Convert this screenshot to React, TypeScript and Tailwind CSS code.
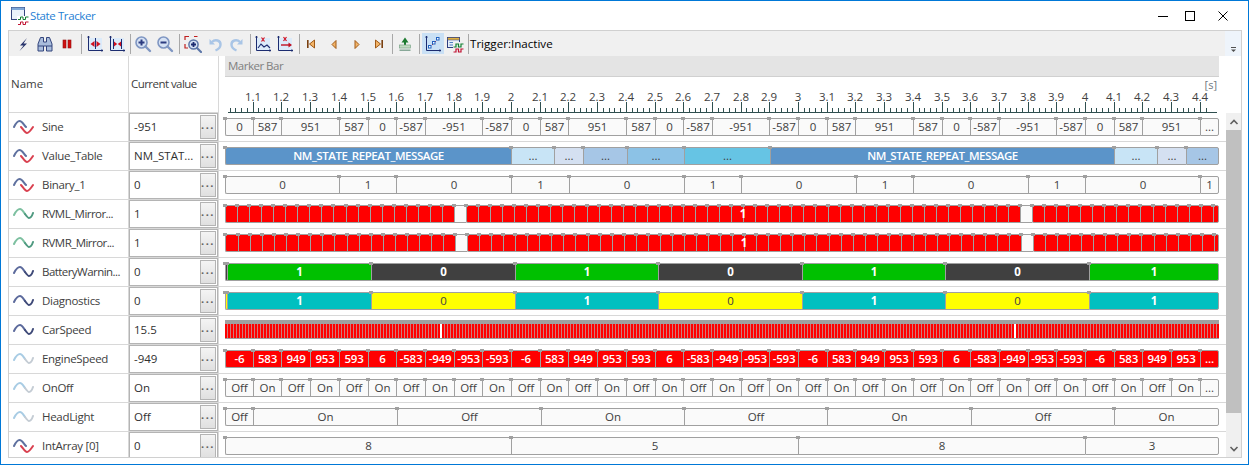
import React from "react";

const X = (t: number) => Math.round(511 + 287 * (t - 2));
const END = 1219;
const START = 225;

type Seg = { w: number; label?: string; cls: string; noMark?: boolean };
const LIGHT = "bg-[#fafafa] text-[#404040]";
const RED = "bg-[#ff0000] text-white";

function segs(bounds: number[], labels: string[], cls: (i: number, l: string) => string): Seg[] {
  return labels.map((label, i) => ({ w: bounds[i + 1] - bounds[i], label, cls: cls(i, label) }));
}

function tenths(from: number, n: number) {
  const out: number[] = [];
  for (let i = 0; i < n; i++) out.push(X(from + i * 0.1));
  return out;
}

function Segment({ s, last }: { s: Seg; last: boolean }) {
  return (
    <div
      style={{ width: s.w }}
      className={`relative flex h-[18px] shrink-0 items-center justify-center whitespace-nowrap border-y border-l border-[#a0a0a0] text-[11.5px] leading-none first:rounded-l-[2px] ${last ? "rounded-r-[2px] border-r" : ""} ${s.cls}`}
    >
      {!s.noMark && <span className="absolute left-[-3px] top-[-2px] h-[3px] w-[4px] bg-[#a0a0a0]" />}
      {s.label}
    </div>
  );
}

function Bar({ items }: { items: Seg[] }) {
  return (
    <div className="flex">
      {items.map((s, i) => (
        <Segment key={i} s={s} last={i === items.length - 1} />
      ))}
    </div>
  );
}

function sineRow(): Seg[] {
  const vals = ["0", "587", "951", "587", "0", "-587", "-951", "-587"];
  const offs = [0, 0.1, 0.2, 0.4, 0.5, 0.6, 0.7, 0.9];
  const b: number[] = [];
  const l: string[] = [];
  for (let p = 0; p < 3; p++) vals.forEach((v, i) => { b.push(X(1 + p + offs[i])); l.push(v); });
  [0, 0.1, 0.2].forEach((o, i) => { b.push(X(4 + o)); l.push(vals[i]); });
  b.push(X(4.4)); l.push("...");
  b.push(END);
  b[0] = START;
  return segs(b, l, () => LIGHT);
}

function engineRow(): Seg[] {
  const vals = ["-6", "583", "949", "953", "593", "6", "-583", "-949", "-953", "-593"];
  const b = tenths(1, 35);
  b[0] = START;
  b.push(END);
  const l = b.slice(0, -1).map((_, i) => (i === 34 ? "..." : vals[i % 10]));
  return segs(b, l, () => `${RED} font-semibold tracking-[-0.2px]`);
}

function onOffRow(): Seg[] {
  const b = tenths(1, 35);
  b[0] = START;
  b.push(END);
  const l = b.slice(0, -1).map((_, i) => (i === 34 ? "..." : i % 2 ? "On" : "Off"));
  return segs(b, l, () => LIGHT);
}

const MAIN = "bg-[#5b94c9] text-white font-semibold tracking-[-0.45px]";
const vtColors = [
  MAIN,
  "bg-[#c8e4f6] text-[#404040]",
  "bg-[#d4e0f1] text-[#404040]",
  "bg-[#a6c6e6] text-[#404040]",
  "bg-[#8cc2e6] text-[#404040]",
  "bg-[#66c4e4] text-[#404040]",
  MAIN,
  "bg-[#c8e4f6] text-[#404040]",
  "bg-[#d4e0f1] text-[#404040]",
  "bg-[#a6c6e6] text-[#404040]",
];
const MSG = "NM_STATE_REPEAT_MESSAGE";
const valueTable = segs(
  [START, 511, 554, 583, 627, 684, 770, 1114, 1157, 1186, END],
  [MSG, "...", "...", "...", "...", "...", MSG, "...", "...", "..."],
  (i) => vtColors[i]
);

const binary = segs(
  [START, 339, 396, 511, 569, 684, 741, 856, 913, 1028, 1085, 1200, END],
  ["0", "1", "0", "1", "0", "1", "0", "1", "0", "1", "0", "1"],
  () => LIGHT
);

function alt(a: string, b: string, first: string) {
  const bounds = [START, 227, 371, 515, 658, 802, 945, 1089, END];
  const labels = ["", "1", "0", "1", "0", "1", "0", "1"];
  return segs(bounds, labels, (i) => (i === 0 ? first : i % 2 ? a : b));
}

const Mark = () => <span className="absolute left-[-3px] top-[-2px] h-[3px] w-[4px] bg-[#a0a0a0]" />;

function Cells({ n, w, shift = 0 }: { n: number; w: number; shift?: number }) {
  return (
    <>
      {Array.from({ length: n }, (_, i) => {
        const x0 = Math.round(i * w);
        const x1 = Math.round((i + 1) * w);
        return (
          <div
            key={i}
            style={{ width: x1 - x0 + (i === 0 ? shift : 0) }}
            className="relative h-[18px] shrink-0 border-y border-l border-[#a0a0a0] bg-[#ff0000] first:rounded-l-[2px]"
          >
            <Mark />
          </div>
        );
      })}
    </>
  );
}

function Mirror({ shift }: { shift: number }) {
  const cell = "relative h-[18px] w-[12px] shrink-0 border-y border-l border-[#a0a0a0] bg-[#fafafa]";
  return (
    <div className="flex w-[994px]">
      <div className="flex">
        <Cells n={19} w={12.05} shift={shift} />
      </div>
      <div className={cell}><Mark /></div>
      <div className="relative flex">
        <Cells n={46} w={12.05} />
        <span className="absolute inset-0 flex items-center justify-center text-[11.5px] font-bold leading-none text-white">1</span>
      </div>
      <div className={cell}><Mark /></div>
      <div className="flex flex-1">
        <Cells n={15} w={12.05} />
        <div className="relative h-[18px] flex-1 rounded-r-[2px] border border-[#a0a0a0] bg-[#ff0000]"><Mark /></div>
      </div>
    </div>
  );
}

function CarSpeed() {
  const stripes =
    "h-[19px] shrink-0 border-y border-t-[4px] border-[#a0a0a0] bg-[repeating-linear-gradient(90deg,#ff0000_0,#ff0000_2px,#cc7c7c_2px,#cc7c7c_3px)]";
  const gap = "h-[19px] w-[2px] shrink-0 border-y border-t-[4px] border-[#a0a0a0] bg-white";
  return (
    <div className="mt-[-1px] flex">
      <div style={{ width: 215 }} className={stripes} />
      <div className={gap} />
      <div style={{ width: 572 }} className={stripes} />
      <div className={gap} />
      <div style={{ width: 203 }} className={stripes} />
    </div>
  );
}

function Wave({ kind }: { kind: "red" | "green" | "navy" | "pale" }) {
  if (kind === "red")
    return (
      <svg width="21" height="16" viewBox="0 0 21 16" fill="none" strokeWidth="2" strokeLinecap="round">
        <path d="M1 8 C3 4 5 2 6.5 2 C9 2 11 6 13 8" stroke="#5f719f" />
        <path d="M8 8 C10 10 12 14 14 14 C16 14 18 11 20 8" stroke="#d9404f" />
      </svg>
    );
  const c = kind === "green" ? ["#7dc0a0", "#4f9a80"] : kind === "navy" ? ["#5c6a9c", "#3f4a78"] : ["#a8cce4", "#c4ccd4"];
  return (
    <svg width="21" height="16" viewBox="0 0 21 16" fill="none" strokeWidth="2" strokeLinecap="round">
      <path d="M1 9 C3 5 5 3 7 3 C9 3 10.5 6 12 8" stroke={c[0]} />
      <path d="M12 8 C13.5 10 15 12 16 12 C17.5 12 19 10 20 7" stroke={c[1]} />
    </svg>
  );
}

const WHITE = "text-white font-bold";
const rows: { name: string; value: string; wave: "red" | "green" | "navy" | "pale"; chart: React.ReactNode }[] = [
  { name: "Sine", value: "-951", wave: "red", chart: <Bar items={sineRow()} /> },
  { name: "Value_Table", value: "NM_STAT...", wave: "red", chart: <Bar items={valueTable} /> },
  { name: "Binary_1", value: "0", wave: "red", chart: <Bar items={binary} /> },
  { name: "RVML_Mirror...", value: "1", wave: "green", chart: <Mirror shift={0} /> },
  { name: "RVMR_Mirror...", value: "1", wave: "green", chart: <Mirror shift={1} /> },
  {
    name: "BatteryWarnin...",
    value: "0",
    wave: "navy",
    chart: <Bar items={alt(`bg-[#00c000] ${WHITE}`, `bg-[#404040] ${WHITE}`, "bg-[#404040]")} />,
  },
  {
    name: "Diagnostics",
    value: "0",
    wave: "navy",
    chart: <Bar items={alt(`bg-[#00c0c0] ${WHITE}`, "bg-[#ffff00] text-[#404040]", "bg-[#ffff00]")} />,
  },
  { name: "CarSpeed", value: "15.5", wave: "navy", chart: <CarSpeed /> },
  { name: "EngineSpeed", value: "-949", wave: "pale", chart: <Bar items={engineRow()} /> },
  { name: "OnOff", value: "On", wave: "pale", chart: <Bar items={onOffRow()} /> },
  {
    name: "HeadLight",
    value: "Off",
    wave: "pale",
    chart: <Bar items={segs([START, 253, 397, 541, 684, 827, 971, 1114, END], ["Off", "On", "Off", "On", "Off", "On", "Off", "On"], () => LIGHT)} />,
  },
  { name: "IntArray [0]", value: "0", wave: "red", chart: <Bar items={segs([START, 511, 798, 1085, END], ["8", "5", "8", "3"], () => LIGHT)} /> },
];

function Ruler() {
  const small: number[] = [];
  for (let i = 1; i <= 171; i++) small.push(X(1 + i * 0.02));
  const labels: number[] = [];
  for (let i = 11; i <= 44; i++) labels.push(i / 10);
  return (
    <svg width="994" height="36" viewBox="225 77 994 36" className="block shrink-0">
      <line x1="228" y1="112.5" x2="1217" y2="112.5" stroke="#2f4f4f" />
      {small.map((x, i) => (x < 1217 ? <line key={i} x1={x + 0.5} x2={x + 0.5} y1="108" y2="112" stroke="#2f4f4f" /> : null))}
      {labels.map((t) => (
        <g key={t}>
          <line x1={X(t) + 0.5} x2={X(t) + 0.5} y1="102" y2="112" stroke="#2f4f4f" />
          <text x={X(t)} y="101" textAnchor="middle" fontSize="11.5" fill="#404040">
            {Number.isInteger(t) ? t : t.toFixed(1)}
          </text>
        </g>
      ))}
      <text x="1217" y="89" textAnchor="end" fontSize="11" fill="#707880">[s]</text>
    </svg>
  );
}

const I = ({ children }: { children: React.ReactNode }) => (
  <svg width="18" height="18" viewBox="0 0 18 18" fill="none">{children}</svg>
);

const Axes = () => (
  <>
    <rect x="3" y="3" width="13" height="12" fill="#dcebfa" />
    <path d="M2.5 1 V15.5 H17" stroke="#1c2c70" strokeWidth="1" />
    <path d="M1.5 2.5 L2.5 1 L3.5 2.5 M15.5 14.5 L17 15.5 L15.5 16.5" stroke="#1c2c70" strokeWidth="0.8" />
  </>
);

const Mag = ({ sign }: { sign: "+" | "-" }) => (
  <>
    <circle cx="7.5" cy="7.5" r="5.5" fill="#d6e2f4" stroke="#7f96c2" strokeWidth="1.6" />
    <path d="M11.5 11.5 L16 16" stroke="#7f96c2" strokeWidth="2.4" strokeLinecap="round" />
    <path d={sign === "+" ? "M4.5 7.5 H10.5 M7.5 4.5 V10.5" : "M4.5 7.5 H10.5"} stroke="#2c3c80" strokeWidth="2" />
  </>
);

const TRI = { fill: "#f2b468", stroke: "#a05a18", strokeWidth: 1 };

const icons: Record<string, React.ReactNode> = {
  bolt: <I><path d="M13 3 L6 10.5 H9.5 L5.5 16 L13 8.5 H9.5 Z" fill="#28346c" /></I>,
  bino: (
    <I>
      <path d="M2 9 L4.5 2.5 H7.5 V7 H10.5 V2.5 H13.5 L16 9 V16 H10.5 V11 H7.5 V16 H2 Z" fill="#a9bddc" stroke="#33447c" strokeWidth="1" />
      <path d="M2 11 H7.5 M10.5 11 H16" stroke="#33447c" strokeWidth="1" />
    </I>
  ),
  pause: <I><rect x="5" y="5" width="3" height="8" fill="#d01010" stroke="#901010" strokeWidth="0.6" /><rect x="10" y="5" width="3" height="8" fill="#d01010" stroke="#901010" strokeWidth="0.6" /></I>,
  expand: <I><Axes /><path d="M9.5 3 V14" stroke="#1c2c70" /><path d="M8.5 6 L4.5 9 L8.5 12 Z M10.5 6 L14.5 9 L10.5 12 Z" fill="#d01020" /></I>,
  shrink: <I><Axes /><path d="M5.5 4 V14 M13.5 4 V14" stroke="#1c2c70" /><path d="M6 6.5 L9.2 9 L6 11.5 Z M13 6.5 L9.8 9 L13 11.5 Z" fill="#d01020" /></I>,
  zin: <I><Mag sign="+" /></I>,
  zout: <I><Mag sign="-" /></I>,
  zbox: (
    <I>
      <path d="M1 5 V1.5 H5 M10 1.5 H13.5 M1 9 V13 H4" stroke="#c02020" strokeWidth="1.2" />
      <circle cx="9.5" cy="9.5" r="4.6" fill="#d6e2f4" stroke="#5c76a8" strokeWidth="1.5" />
      <path d="M13 13 L17 17" stroke="#5c76a8" strokeWidth="2.2" strokeLinecap="round" />
      <path d="M7 9.5 H12 M9.5 7 V12" stroke="#1c2c70" strokeWidth="1.8" />
    </I>
  ),
  undo: <I><path d="M3.5 4 V9.5 H9 Z" fill="#a9c5e6" /><path d="M6 7 C9 4 15 5 14.5 10 C14.3 12.5 12 14.5 9.5 15.5" stroke="#a9c5e6" strokeWidth="2.4" /></I>,
  redo: <I><path d="M14.5 4 V9.5 H9 Z" fill="#a9c5e6" /><path d="M12 7 C9 4 3 5 3.5 10 C3.7 12.5 6 14.5 8.5 15.5" stroke="#a9c5e6" strokeWidth="2.4" /></I>,
  gx: <I><Axes /><path d="M4 13 L7 9 L10 12 L13 10 L16 13" stroke="#1c2c70" strokeWidth="1.1" /><path d="M7.5 2.5 L10.5 6.5 M10.5 2.5 L7.5 6.5" stroke="#d01020" strokeWidth="1.2" /></I>,
  gr: <I><Axes /><path d="M5 10 H13" stroke="#c01020" strokeWidth="1.4" /><path d="M12.5 7.5 L16 10 L12.5 12.5 Z" fill="#c01020" /><path d="M7.5 2 L10.5 6 M10.5 2 L7.5 6" stroke="#d01020" strokeWidth="1.2" /></I>,
  first: <I><rect x="5" y="5" width="1.6" height="8" fill="#7a4010" /><path d="M12.5 5 V13 L7.5 9 Z" {...TRI} /></I>,
  prev: <I><path d="M11 5.5 V13.5 L7 9.5 Z" {...TRI} /></I>,
  next: <I><path d="M7 5.5 V13.5 L11 9.5 Z" {...TRI} /></I>,
  last: <I><rect x="11.4" y="5" width="1.6" height="8" fill="#7a4010" /><path d="M5.5 5 V13 L10.5 9 Z" {...TRI} /></I>,
  stamp: <I><path d="M9 2.5 L12.5 7.5 H5.5 Z" fill="#1c7a30" /><rect x="8" y="6" width="2" height="4" fill="#1c7a30" /><rect x="3.5" y="10" width="11" height="3" fill="#c4dcc4" stroke="#7aa488" strokeWidth="0.7" /><rect x="3.5" y="14.5" width="11" height="1.5" fill="#88a898" /></I>,
  scatter: (
    <I>
      <path d="M2.5 1 V15.5 H17" stroke="#1c2c70" strokeWidth="1" />
      <path d="M1.5 2.5 L2.5 1 L3.5 2.5 M15.5 14.5 L17 15.5 L15.5 16.5" stroke="#1c2c70" strokeWidth="0.8" />
      <path d="M5 13 L15 3" stroke="#d02020" strokeWidth="1" strokeDasharray="2 2" />
      <rect x="4.5" y="10.5" width="2.5" height="2.5" fill="#fff" stroke="#1f60c0" />
      <rect x="8.5" y="6.5" width="2.5" height="2.5" fill="#fff" stroke="#1f60c0" />
      <rect x="12.5" y="2.5" width="2.5" height="2.5" fill="#fff" stroke="#1f60c0" />
    </I>
  ),
  pulse: (
    <I>
      <rect x="1.5" y="2.5" width="12" height="10" fill="#e6eef8" stroke="#2c3c80" />
      <rect x="1.5" y="2.5" width="12" height="2.5" fill="#e0b040" stroke="#2c3c80" strokeWidth="0.5" />
      <path d="M3.5 7.5 H8 M3.5 10 H7" stroke="#4f7fc0" />
      <rect x="7" y="7" width="11" height="11" fill="#f0f0f0" />
      <path d="M7.5 12 H10 V9 H12.5 V12 H15 V9 H17.5" stroke="#108030" strokeWidth="1.2" />
      <path d="M7.5 17 H10 V14 H12.5 V17 H15 V14 H17.5" stroke="#c01030" strokeWidth="1.2" />
    </I>
  ),
};

function Tool({ name, active }: { name: string; active?: boolean }) {
  return (
    <div className={`flex h-[21px] w-[22px] shrink-0 items-center justify-center ${active ? "bg-[#c9e0f5]" : ""}`}>
      {icons[name]}
    </div>
  );
}

const Sep = ({ className }: { className: string }) => <div className={`h-[20px] w-px shrink-0 bg-[#a8a8a8] ${className}`} />;

function Toolbar() {
  return (
    <div className="flex h-[26px] shrink-0 border-t border-[#d0d0d0]">
      <div className="flex h-[25px] w-[1218px] items-center bg-[#f0f0f0] pl-[3px]">
        <Tool name="bolt" />
        <Tool name="bino" />
        <Tool name="pause" />
        <Sep className="ml-[3px] mr-[2px]" />
        <Tool name="expand" />
        <Tool name="shrink" />
        <Sep className="ml-[2px] mr-[1px]" />
        <Tool name="zin" />
        <Tool name="zout" />
        <Sep className="ml-[3px] mr-[2px]" />
        <Tool name="zbox" />
        <Tool name="undo" />
        <Tool name="redo" />
        <Sep className="ml-[2px] mr-[1px]" />
        <Tool name="gx" />
        <Tool name="gr" />
        <Sep className="ml-[3px] mr-[0px]" />
        <Tool name="first" />
        <div className="w-px" />
        <Tool name="prev" />
        <div className="w-px" />
        <Tool name="next" />
        <Tool name="last" />
        <Sep className="ml-[2px] mr-[1px]" />
        <Tool name="stamp" />
        <Sep className="ml-[3px] mr-[2px]" />
        <Tool name="scatter" active />
        <Tool name="pulse" />
        <Sep className="ml-[2px] mr-[1px]" />
        <span className="text-[11.6px] leading-none text-black">Trigger:Inactive</span>
      </div>
      <div className="flex h-[25px] w-[16px] flex-col items-center justify-end bg-[#eef4fb] pb-[3px]">
        <svg width="7" height="6" viewBox="0 0 7 6"><path d="M1 0.5 H6" stroke="#505050" /><path d="M1 2.5 H6 L3.5 5 Z" fill="#505050" /></svg>
      </div>
    </div>
  );
}

function Scrollbar() {
  return (
    <div className="flex w-[16px] flex-col">
      <div className="h-[57px] shrink-0 bg-white" />
      <div className="flex flex-1 flex-col bg-[#f0f0f0]">
        <div className="flex h-[17px] items-center justify-center">
          <svg width="10" height="6" viewBox="0 0 10 6" fill="none"><path d="M1.5 5 L5 1.5 L8.5 5" stroke="#606060" strokeWidth="1.6" /></svg>
        </div>
        <div className="h-[283px] bg-[#c0c0c0]" />
        <div className="flex-1" />
        <div className="flex h-[17px] items-center justify-center">
          <svg width="10" height="6" viewBox="0 0 10 6" fill="none"><path d="M1.5 1 L5 4.5 L8.5 1" stroke="#606060" strokeWidth="1.6" /></svg>
        </div>
      </div>
    </div>
  );
}

export default function App() {
  return (
    <div className="flex h-[466px] w-[1250px] flex-col overflow-hidden bg-white font-['Open_Sans',sans-serif] text-[#404040]">
      <div className="flex h-[465px] w-[1249px] flex-col border border-[#0078d7]">
        <div className="flex h-[29px] shrink-0 items-center pl-[9px]">
          <svg width="20" height="20" viewBox="0 0 20 20" fill="none">
            <rect x="1.5" y="1.5" width="13" height="12" fill="#eaf2fa" stroke="#34467e" />
            <rect x="1.5" y="1.5" width="13" height="2.5" fill="#7fa8d8" />
            <rect x="7" y="10" width="13" height="10" fill="#fff" />
            <path d="M8 13.5 H10.5 V11 H13 V13.5 H15.5 V11 H18.5" stroke="#108030" />
            <path d="M8 18.5 H10.5 V16 H13 V18.5 H15.5 V16 H18.5" stroke="#c01030" />
          </svg>
          <span className="text-[11.5px] leading-none tracking-[-0.4px] text-[#1f7fd4]">State Tracker</span>
          <div className="ml-auto flex items-center pr-[20px]">
            <svg width="10" height="10" viewBox="0 0 10 10"><path d="M0 5.5 H10" stroke="#000" /></svg>
            <svg width="10" height="10" viewBox="0 0 10 10" className="ml-[17px]"><rect x="0.5" y="0.5" width="9" height="9" fill="none" stroke="#000" /></svg>
            <svg width="10" height="10" viewBox="0 0 10 10" className="ml-[23px]"><path d="M0.5 0.5 L9.5 9.5 M9.5 0.5 L0.5 9.5" stroke="#000" /></svg>
          </div>
        </div>

        <div className="mx-[7px] flex h-[428px] w-[1234px] flex-col border-x border-b border-[#d0d0d0]">
          <Toolbar />
          <div className="flex min-h-0 flex-1 overflow-hidden">
            <div className="flex w-[1217px] flex-col">
              <div className="flex h-[57px] shrink-0">
                <div className="flex w-[120px] items-center border-b border-r border-[#d8d8d8] pl-[2px] text-[11.5px] leading-none">Name</div>
                <div className="flex w-[90px] items-center border-b border-r border-[#d8d8d8] pl-[2px] text-[11.5px] leading-none tracking-[-0.55px]">Current value</div>
                <div className="flex w-[1007px] flex-col pl-[6px]">
                  <div className="flex h-[21px] w-[994px] shrink-0 items-center border-b border-[#d0d0d0] bg-[#e4e4e4] pl-[3px] text-[11.5px] font-medium leading-none tracking-[-0.5px] text-[#808080]">Marker Bar</div>
                  <Ruler />
                </div>
              </div>
              {rows.map((r) => (
                <div key={r.name} className="flex h-[29px] shrink-0 border-b border-[#d8d8d8]">
                  <div className="flex w-[120px] items-center border-r border-[#d8d8d8] pl-[4px]">
                    <Wave kind={r.wave} />
                    <span className={`ml-[8px] whitespace-nowrap text-[11.5px] leading-none ${r.name.endsWith("...") ? "tracking-[-0.55px]" : "tracking-[-0.3px]"}`}>{r.name}</span>
                  </div>
                  <div className="flex w-[90px] border-r border-[#d8d8d8]">
                    <div className="flex h-[28px] w-[89px] items-center justify-between border-[1.5px] border-[#b4b4b4] bg-white pl-[4px] pr-[1px]">
                      <span className="whitespace-nowrap text-[11.5px] leading-none text-[#303030]">{r.value}</span>
                      <div className="flex h-[24px] w-[16px] items-center justify-center border border-[#b4b4b4] bg-gradient-to-b from-[#f4f4f4] to-[#e0e0e0] pb-[5px] text-[11px] font-bold leading-none tracking-[1.5px] text-[#606060]">...</div>
                    </div>
                  </div>
                  <div className="w-[1007px] pl-[6px] pt-[5px]">{r.chart}</div>
                </div>
              ))}
            </div>
            <Scrollbar />
          </div>
        </div>
      </div>
    </div>
  );
}
